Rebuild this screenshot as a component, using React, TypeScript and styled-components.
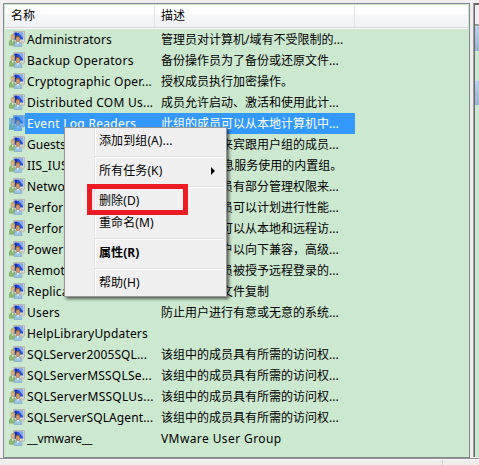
import React from "react";
import styled, { createGlobalStyle, css } from "styled-components";

const GlobalStyle = createGlobalStyle`
  * { box-sizing: border-box; }
  body {
    margin: 0;
    overflow: hidden;
    background: #f0eded;
    color: #000;
    font: 12px/21px "Noto Sans", "Noto Sans CJK SC", sans-serif;
  }
`;

const Window = styled.div`
  position: relative;
  display: flex;
  flex-direction: column;
  width: 479px;
  height: 465px;
  background: #f0eeef;
  overflow: hidden;
`;

const Workspace = styled.main`
  display: flex;
  gap: 3px;
  height: 458px;
  padding: 3px 0 0 3px;
`;

const ListPanel = styled.section`
  width: 467px;
  height: 455px;
  flex: none;
  border: 1px solid #828790;
  padding: 1px;
  background: #cce8cf;
`;

const HeaderRow = styled.div`
  display: grid;
  grid-template-columns: 150px 200px 1fr;
  height: 24px;
  border-bottom: 1px solid #fff;
  background: linear-gradient(#fff 0 9px, #f7f8fa 9px, #f0f1f3 22px, #d5d5d5 22px);
`;

const HeaderCell = styled.div`
  height: 22px;
  padding-left: 6px;
  line-height: 22px;
  border-right: 1px solid #e2e3e5;
`;

const Row = styled.div<{ $selected?: boolean }>`
  display: grid;
  grid-template-columns: 20px 130px 200px;
  height: 21px;
  ${(p) =>
    p.$selected &&
    css`
      color: #fff;
      background: linear-gradient(90deg, transparent 20px, #3399ff 20px 350px, transparent 350px);
    `}
`;

const IconCell = styled.div`
  padding: 2px 0 0 4px;
  height: 21px;
`;

const GroupSvg = styled.svg`
  display: block;
  width: 16px;
  height: 16px;
`;

const Cell = styled.div<{ $spacing?: number; $indent: number }>`
  padding-left: ${(p) => p.$indent}px;
  white-space: nowrap;
  letter-spacing: ${(p) => p.$spacing ?? 0}px;
  line-height: 22px;
`;

const SidePanel = styled.aside`
  flex: 1;
  height: 454px;
  border: solid #69696b;
  border-width: 2px 0 0 1px;
  box-shadow: -1px 0 #a0a0a0;
  margin-left: 1px;
  background: #cce8cf;
`;

const SideHeading = styled.div`
  height: 21px;
  border-top: 1px solid #fff;
  border-bottom: 2px solid #999;
  background: #f0eeef;
`;

const SideBand = styled.div`
  height: 25px;
  margin-bottom: 29px;
  border-top: 1px solid #c8d9ee;
  background: linear-gradient(#bcd0e8, #99b4d1);
`;

const StatusBar = styled.footer`
  display: grid;
  grid-template-columns: 443px 1fr;
  height: 7px;
  border-top: 1px solid #909090;
  background: linear-gradient(#fff 1px, #f0eded 1px);
`;

const StatusPart = styled.div`
  margin-top: 1px;
  border-right: 1px solid #d0cece;
`;

const Menu = styled.nav`
  position: absolute;
  left: 64px;
  top: 127px;
  width: 163px;
  height: 170px;
  padding: 2px;
  border: 1px solid #979797;
  background: linear-gradient(90deg, #f0f0f0 29px, #e2e3e3 29px 30px, #fff 30px 31px, #f0f0f0 31px);
  box-shadow: 2px 2px 3px rgba(0, 0, 0, 0.6);
`;

const MenuItem = styled.div<{ $bold?: boolean }>`
  display: flex;
  align-items: center;
  justify-content: space-between;
  height: 22px;
  padding: 0 8px 1px 32px;
  letter-spacing: 0.1px;
  font-weight: ${(p) => (p.$bold ? 700 : 400)};
`;

const Separator = styled.hr`
  height: 2px;
  margin: 4px 0 2px 28px;
  border: 0;
  border-top: 1px solid #e0e0e0;
  border-bottom: 1px solid #fff;
`;

const Arrow = styled.svg`
  width: 5px;
  height: 8px;
`;

const Highlight = styled.div`
  position: absolute;
  left: 87px;
  top: 184px;
  width: 101px;
  height: 31px;
  border: solid #ed1c24;
  border-width: 5px;
`;

function GroupIcon({ selected }: { selected?: boolean }) {
  return (
    <GroupSvg viewBox="0 0 16 16">
      <path d="M4.5.5h11v10.5h-11z" fill="#d9d9d6" stroke="#b9b8b2" />
      <path d="M5.5 1.7h8.6v6.8H5.5z" fill="#2450dc" />
      <path d="M9.5 1.7h4.6v5.5z" fill="#86a9f6" />
      <path d="M5.5 1.7H8v6.8H5.5z" fill="#1432b8" />
      <path d="M10 11h5v1.5h-5z" fill="#c4c2ba" />
      <path d="M.4 14.2v-3Q.7 8.6 3.1 8.6T6 11.4v2.8z" fill="#8fb873" stroke="#6b9656" strokeWidth=".5" />
      <path d="m2.6 8.4 1.2 3 1-3z" fill="#e6f2da" />
      <ellipse cx="3.9" cy="5.9" rx="1.9" ry="2.6" fill="#dcb384" stroke="#a98a5c" strokeWidth=".5" />
      <path d="M1.9 5.4Q2 2.9 4.1 2.9t2 2.3L3.7 4.6z" fill="#b9a36c" />
      <path d="M5.2 15.7v-2.2q.4-2.8 3.4-2.8t4.2 2.8v2.2z" fill="#9bc3e2" stroke="#6b98bd" strokeWidth=".5" />
      <path d="m7.8 10.5 1.1 3.2 1.2-3.2z" fill="#f2f9ff" />
      <ellipse cx="8.9" cy="8" rx="2" ry="2.8" fill="#cf9a6c" stroke="#966743" strokeWidth=".5" />
      <path d="M6.8 7.5Q6.5 4.7 8.9 4.7t2.2 2.8l-.9-1.3-2.5-.1z" fill="#8a5a3a" />
      {selected && <path d="M0 3h4V0h12v12h-3v4H5v-1H0z" fill="#3399ff" opacity=".5" />}
    </GroupSvg>
  );
}

type Group = { name: string; description: string; spacing?: number; selected?: boolean };

const groups: Group[] = [
  { name: "Administrators", spacing: 0.08, description: "管理员对计算机/域有不受限制的..." },
  { name: "Backup Operators", spacing: 0.3, description: "备份操作员为了备份或还原文件..." },
  { name: "Cryptographic Oper...", spacing: 0.27, description: "授权成员执行加密操作。" },
  { name: "Distributed COM Us...", spacing: 0.24, description: "成员允许启动、激活和使用此计..." },
  { name: "Event Log Readers", spacing: 0.3, description: "此组的成员可以从本地计算机中...", selected: true },
  { name: "Guests", description: "按默认值，来宾跟用户组的成员..." },
  { name: "IIS_IUSRS", spacing: 0.2, description: "Internet 信息服务使用的内置组。" },
  { name: "Network Configurat...", spacing: 0.2, description: "此组中的成员有部分管理权限来..." },
  { name: "Performance Log U...", spacing: 0.2, description: "该组中的成员可以计划进行性能..." },
  { name: "Performance Monit...", spacing: 0.2, description: "此组的成员可以从本地和远程访..." },
  { name: "Power Users", spacing: 0.2, description: "包括高级用户以向下兼容，高级..." },
  { name: "Remote Desktop Us...", spacing: 0.2, description: "此组中的成员被授予远程登录的..." },
  { name: "Replicator", spacing: 0.2, description: "支持域中的文件复制" },
  { name: "Users", spacing: 0.2, description: "防止用户进行有意或无意的系统..." },
  { name: "HelpLibraryUpdaters", spacing: 0.18, description: "" },
  { name: "SQLServer2005SQL...", spacing: 0.12, description: "该组中的成员具有所需的访问权..." },
  { name: "SQLServerMSSQLSe...", spacing: 0.2, description: "该组中的成员具有所需的访问权..." },
  { name: "SQLServerMSSQLUs...", spacing: 0.24, description: "该组中的成员具有所需的访问权..." },
  { name: "SQLServerSQLAgent...", spacing: 0.12, description: "该组中的成员具有所需的访问权..." },
  { name: "__vmware__", spacing: -0.1, description: "VMware User Group" },
];

export default function App() {
  return (
    <>
      <GlobalStyle />
      <Window>
        <Workspace>
          <ListPanel>
            <HeaderRow>
              <HeaderCell>名称</HeaderCell>
              <HeaderCell>描述</HeaderCell>
            </HeaderRow>
            {groups.map((g) => (
              <Row key={g.name} $selected={g.selected}>
                <IconCell>
                  <GroupIcon selected={g.selected} />
                </IconCell>
                <Cell $indent={2} $spacing={g.spacing}>{g.name}</Cell>
                <Cell $indent={6} $spacing={g.description.startsWith("VM") ? 0.4 : 0}>
                  {g.description}
                </Cell>
              </Row>
            ))}
          </ListPanel>
          <SidePanel>
            <SideHeading />
            <SideBand />
            <SideBand />
          </SidePanel>
        </Workspace>
        <StatusBar>
          <StatusPart />
        </StatusBar>
        <Menu>
          <MenuItem>添加到组(A)...</MenuItem>
          <Separator />
          <MenuItem>
            所有任务(K)
            <Arrow viewBox="0 0 5 8">
              <path d="M0 0 4 4 0 8z" />
            </Arrow>
          </MenuItem>
          <Separator />
          <MenuItem>删除(D)</MenuItem>
          <MenuItem>重命名(M)</MenuItem>
          <Separator />
          <MenuItem $bold>属性(R)</MenuItem>
          <Separator />
          <MenuItem>帮助(H)</MenuItem>
        </Menu>
        <Highlight />
      </Window>
    </>
  );
}
